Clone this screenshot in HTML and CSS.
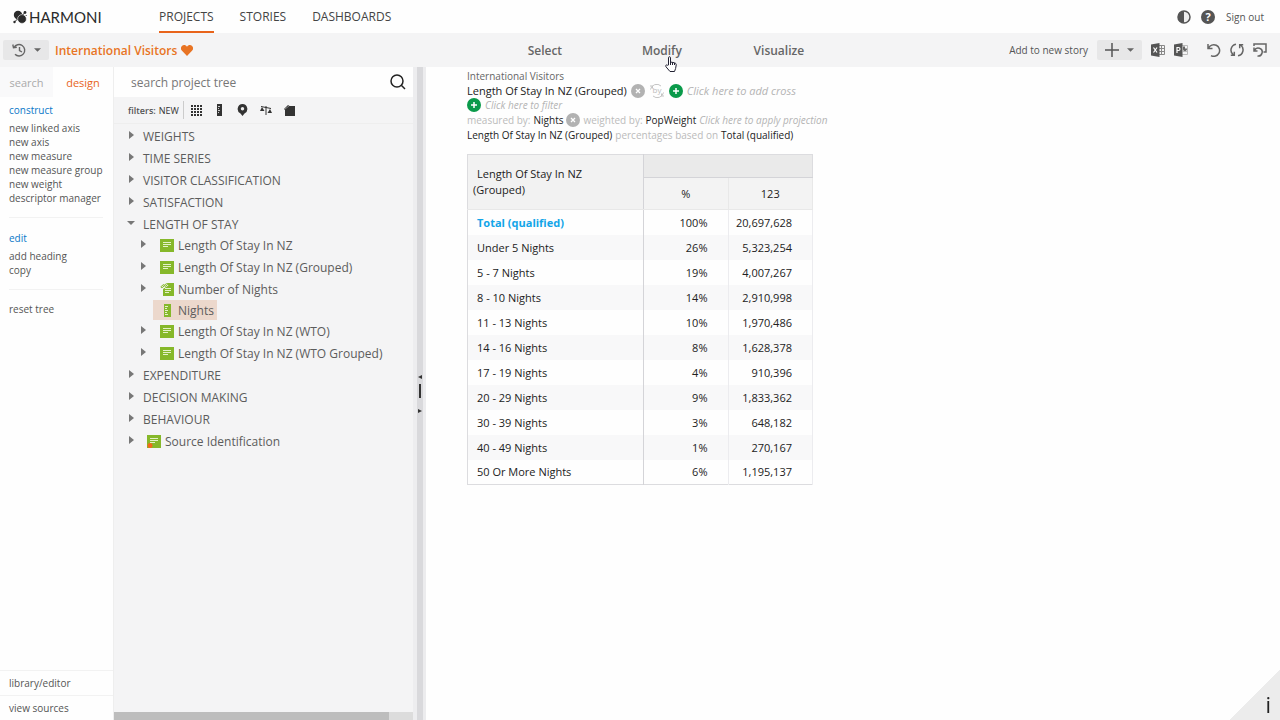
FILE: index.html
```html
<!DOCTYPE html>
<html lang="en">
<head>
<meta charset="UTF-8">
<meta name="viewport" content="width=device-width, initial-scale=1">
<title>Harmoni - International Visitors</title>
<link rel="stylesheet" href="styles.css">
</head>
<body>

<!-- shared icons -->
<svg class="defs" width="0" height="0" aria-hidden="true">
  <symbol id="arrow" viewBox="0 0 6 8"><path d="M1 0l5 4-5 4z"/></symbol>
  <symbol id="axis" viewBox="0 0 14 13">
    <path fill="#86b82a" d="M0 0h14v13H0z"/>
    <path stroke="#e4f1c8" d="M3 3.5h8M3 5.5h8M3 7.5h5"/>
  </symbol>
  <symbol id="close" viewBox="0 0 14 14">
    <circle cx="7" cy="7" r="7" fill="#b2b2b2"/>
    <path stroke="#fff" stroke-width="1.3" d="M5 5l4 4M9 5l-4 4"/>
  </symbol>
  <symbol id="plus" viewBox="0 0 14 14">
    <circle cx="7" cy="7" r="7" fill="#0a9a4a"/>
    <path stroke="#fff" stroke-width="1.5" d="M4 7h6M7 4v6"/>
  </symbol>
  <symbol id="caret" viewBox="0 0 8 4"><path d="M0 0h8L4 4z"/></symbol>
</svg>

<header class="topbar">
  <a class="logo" href="#">
    <svg width="14" height="14" viewBox="0 0 14 14" fill="#2b2b2b">
      <circle cx="5" cy="5" r="4.2"/>
      <circle cx="9" cy="9" r="4.4" stroke="#fefefe" stroke-width=".6"/>
      <circle cx="12" cy="2.5" r="1.4"/>
      <circle cx="1.5" cy="12" r="1.2"/>
      <circle cx="13.2" cy="5.5" r=".6"/>
      <path stroke="#2b2b2b" d="M1.5 12l3-3M9 5.500l3-3"/>
    </svg>
    <span>HARMONI</span>
  </a>
  <nav class="main-nav">
    <a class="active" href="#">PROJECTS</a>
    <a href="#">STORIES</a>
    <a href="#">DASHBOARDS</a>
  </nav>
  <div class="account">
    <button aria-label="Contrast">
      <svg width="14" height="14" viewBox="0 0 14 14"><circle cx="7" cy="7" r="6" fill="#eee" stroke="#555" stroke-width="1.5"/><path fill="#555" d="M7 1a6 6 0 0 0 0 12z"/></svg>
    </button>
    <button aria-label="Help" class="help">?</button>
    <a href="#">Sign out</a>
  </div>
</header>

<div class="toolbar">
  <div class="project">
    <button class="drop" aria-label="History">
      <svg width="14" height="14" viewBox="0 0 14 14" fill="none" stroke="#666" stroke-width="1.4"><path d="M2 4.500A5.700 5.700 0 1 1 3 11.300M.8 1.500l.7 3.300 3.300-.5M7.500 4v3.500l2.500 1.500"/></svg>
      <svg class="caret" width="7" height="4"><use href="#caret"/></svg>
    </button>
    <h1>International Visitors</h1>
    <svg width="12" height="11" viewBox="0 0 12 11"><path fill="#e87424" d="M6 11L1 5.800A3.200 3.200 0 0 1 .9 1C2.300-.4 4.800-.3 6 1.800 7.200-.3 9.700-.4 11.100 1a3.200 3.200 0 0 1-.1 4.800z"/></svg>
  </div>
  <nav class="mode-nav">
    <a href="#">Select</a>
    <a href="#">Modify
      <svg class="pointer" width="12" height="16" viewBox="0 0 12 16"><path fill="#fff" stroke="#223" d="M3.500 9V1.800c0-1.500 2-1.500 2 0V6l4 .8c1.200.3 1.800 1 1.700 2.200l-.6 3.500-1.100 3H5L1 10.800c-1-1.300.4-2.500 1.500-1.500zM5.500 6v3M7.500 6.500v2.500M9.500 7v2"/></svg>
    </a>
    <a href="#">Visualize</a>
  </nav>
  <div class="tools">
    <span>Add to new story</span>
    <button class="drop add" aria-label="Add to new story">
      <svg width="14" height="14" viewBox="0 0 14 14" stroke="#555" stroke-width="1.5"><path d="M7 0v14M0 7h14"/></svg>
      <svg class="caret" width="7" height="4"><use href="#caret"/></svg>
    </button>
    <button aria-label="Export to Excel">
      <svg width="14" height="14" viewBox="0 0 14 14"><path fill="none" stroke="#888" d="M8 2.500h5.500v9H8M8 5.500h5.500M8 8.500h5.500M10.500 2.500v9"/><path fill="#555" d="M0 1.500L8.500 0v14L0 12.500z"/><path stroke="#fff" stroke-width="1.2" d="M2.500 4.500l3.500 5M6 4.500l-3.500 5"/></svg>
    </button>
    <button aria-label="Export to PowerPoint">
      <svg width="14" height="14" viewBox="0 0 14 14"><path fill="none" stroke="#bbb" d="M8 2.500h5.500v9H8M9 8.500h4"/><path fill="#666" d="M9 3.500h2v2h2a2 2 0 0 1-4 1z"/><path fill="#555" d="M0 1.500L8.500 0v14L0 12.500z"/><path stroke="#fff" stroke-width="1.2" fill="none" d="M3 10V4.500h1.500a1.500 1.500 0 0 1 0 3H3"/></svg>
    </button>
    <button class="undo" aria-label="Undo">
      <svg width="14" height="14" viewBox="0 0 14 14" fill="none" stroke="#666" stroke-width="1.5"><path d="M1 1v4.500h4.500M1.500 5.200A5.800 5.800 0 1 1 4 12.600"/></svg>
    </button>
    <button aria-label="Refresh">
      <svg width="14" height="14" viewBox="0 0 14 14" fill="none" stroke="#666" stroke-width="1.5"><path d="M6 1.200A6 6 0 0 0 3.500 12M.8 12.200h3.500V8.700M8 12.800A6 6 0 0 0 10.500 2M13.200 1.800H9.700v3.500"/></svg>
    </button>
    <button aria-label="Reset view">
      <svg width="14" height="14" viewBox="0 0 14 14" fill="none" stroke="#666" stroke-width="1.5"><path d="M1 3V1h12v8h-2.500M1 4.500v3.500h3.500M1.500 7.500A4 4 0 1 1 4.500 13"/></svg>
    </button>
  </div>
</div>

<main class="workspace">
  <aside class="side">
    <div class="tabs">
      <button>search</button>
      <button class="active">design</button>
    </div>
    <section>
      <h2>construct</h2>
      <a href="#">new linked axis</a>
      <a href="#">new axis</a>
      <a href="#">new measure</a>
      <a href="#">new measure group</a>
      <a href="#">new weight</a>
      <a href="#">descriptor manager</a>
    </section>
    <section>
      <h2>edit</h2>
      <a href="#">add heading</a>
      <a href="#">copy</a>
    </section>
    <section>
      <a href="#">reset tree</a>
    </section>
    <div class="side-links">
      <a href="#">library/editor</a>
      <a href="#">view sources</a>
    </div>
  </aside>

  <div class="tree-panel">
    <form class="search">
      <input type="text" aria-label="Search project tree" placeholder="search project tree">
      <button aria-label="Search">
        <svg width="16" height="16" viewBox="0 0 16 16" fill="none" stroke="#222" stroke-width="1.5"><circle cx="7" cy="7" r="6"/><path d="M11.300 11.300L15 15"/></svg>
      </button>
    </form>
    <div class="filters">
      <b>filters:</b>
      <button class="new">NEW</button>
      <button aria-label="Grid"><svg width="11" height="11" viewBox="0 0 11 11" stroke="#333" stroke-width="2" stroke-dasharray="2 1"><path d="M0 1h11M0 4h11M0 7h11M0 10h11"/></svg></button>
      <button aria-label="Measure"><svg width="11" height="12" viewBox="0 0 11 12"><path fill="#333" d="M3 0h5v12H3z"/><path stroke="#ccc" d="M4 2.500h2M4 4.500h1M4 6.500h2M4 8.500h1"/></svg></button>
      <button aria-label="Location"><svg width="11" height="12" viewBox="0 0 11 12"><path fill="#333" d="M5.500 0a5 5 0 0 1 2 9.500L5.500 12l-2-2.500a5 5 0 0 1 2-9.500z"/><circle cx="5.5" cy="4.8" r="1.7" fill="#eee"/></svg></button>
      <button aria-label="Weight"><svg width="12" height="11" viewBox="0 0 12 11" fill="#333"><path d="M0 6l2-4 2.500 4zM7.500 8L10 4l2 4z"/><path stroke="#333" fill="none" d="M1 1.500l10 2M6 1v9"/></svg></button>
      <button aria-label="Custom"><svg width="11" height="11" viewBox="0 0 11 11"><path fill="#333" d="M0 4l2-2 2-2 1.500 1H11v10H1V5z"/><path stroke="#aaa" stroke-width=".7" d="M1 4l4-3"/></svg></button>
    </div>
    <ul class="tree">
      <li><button><svg class="arrow"><use href="#arrow"/></svg>WEIGHTS</button></li>
      <li><button><svg class="arrow"><use href="#arrow"/></svg>TIME SERIES</button></li>
      <li><button><svg class="arrow"><use href="#arrow"/></svg>VISITOR CLASSIFICATION</button></li>
      <li><button><svg class="arrow"><use href="#arrow"/></svg>SATISFACTION</button></li>
      <li>
        <button><svg class="arrow open" viewBox="0 0 8 4"><path d="M0 0h8L4 4z"/></svg>LENGTH OF STAY</button>
        <ul>
          <li><button><svg class="arrow"><use href="#arrow"/></svg><svg class="type"><use href="#axis"/></svg>Length Of Stay In NZ</button></li>
          <li><button><svg class="arrow"><use href="#arrow"/></svg><svg class="type"><use href="#axis"/></svg>Length Of Stay In NZ (Grouped)</button></li>
          <li><button><svg class="arrow"><use href="#arrow"/></svg><svg class="type" viewBox="0 0 14 13"><path fill="#86b82a" d="M3 3l4-3h7v13H3z"/><path stroke="#e4f1c8" d="M5 5.500h6M5 7.500h6M5 9.500h4"/><path stroke="#f4f4f5" stroke-width="5" d="M0 5l7-4.500"/><path fill="none" stroke="#86b82a" d="M.8 3.800l2.700-2.300 1 1.300-2.600 2zM4 2.500L6.500.6l1 1.200L5 3.500z"/></svg>Number of Nights</button></li>
          <li><button class="selected"><svg class="type" viewBox="0 0 14 13"><path fill="#86b82a" d="M4 0h7v13H4z"/><path stroke="#e4f1c8" d="M5 2.500h3M5 4.500h2M5 6.500h3M5 8.500h2M5 10.500h3"/></svg>Nights</button></li>
          <li><button><svg class="arrow"><use href="#arrow"/></svg><svg class="type"><use href="#axis"/></svg>Length Of Stay In NZ (WTO)</button></li>
          <li><button><svg class="arrow"><use href="#arrow"/></svg><svg class="type"><use href="#axis"/></svg>Length Of Stay In NZ (WTO Grouped)</button></li>
        </ul>
      </li>
      <li><button><svg class="arrow"><use href="#arrow"/></svg>EXPENDITURE</button></li>
      <li><button><svg class="arrow"><use href="#arrow"/></svg>DECISION MAKING</button></li>
      <li><button><svg class="arrow"><use href="#arrow"/></svg>BEHAVIOUR</button></li>
      <li class="source"><button><svg class="arrow"><use href="#arrow"/></svg><svg class="type" viewBox="0 0 14 13"><path fill="#86b82a" d="M0 0h14v13H0z"/><path stroke="#e4f1c8" d="M3 3.500h8M3 5.500h8M3 7.500h5"/><circle cx="3" cy="10.5" r="2.5" fill="#f26a1b"/></svg>Source Identification</button></li>
    </ul>
    <div class="scrollbar"><div class="thumb"></div></div>
  </div>

  <div class="splitter">
    <svg width="4" height="44" viewBox="0 0 4 44" fill="#333"><path d="M4 3v4L0 5zM1 12h2v14H1zM0 37v4l4-2z"/></svg>
  </div>

  <section class="report">
    <div class="path">International Visitors</div>
    <div class="line axis-line">
      <span>Length Of Stay In NZ (Grouped)</span>
      <button aria-label="Remove axis"><svg class="badge"><use href="#close"/></svg></button>
      <svg class="by" width="16" height="14" viewBox="0 0 16 14"><path fill="none" stroke="#c4c4c4" d="M1 2h2.500v2.500M1.500 5.500A6.300 6.300 0 0 1 12 2M15 12h-2.500V9.500M14.500 8.500A6.300 6.300 0 0 1 4 12"/><text x="8" y="9" text-anchor="middle">by</text></svg>
      <button aria-label="Add cross"><svg class="badge"><use href="#plus"/></svg></button>
      <a class="hint" href="#">Click here to add cross</a>
    </div>
    <div class="line filter-line">
      <button aria-label="Add filter"><svg class="badge"><use href="#plus"/></svg></button>
      <a class="hint" href="#">Click here to filter</a>
    </div>
    <div class="line">
      <span class="muted">measured by:</span>
      <span>Nights</span>
      <button aria-label="Remove measure"><svg class="badge"><use href="#close"/></svg></button>
      <span class="muted">weighted by:</span>
      <span>PopWeight</span>
      <a class="hint" href="#">Click here to apply projection</a>
    </div>
    <div class="line">
      <span>Length Of Stay In NZ (Grouped)</span>
      <span class="muted">percentages based on</span>
      <span>Total (qualified)</span>
    </div>

    <table>
      <thead>
        <tr><th class="axis-head" rowspan="2" scope="col">Length Of Stay In NZ (Grouped)</th><th class="group" colspan="2"></th></tr>
        <tr><th class="unit" scope="col">%</th><th class="unit" scope="col">123</th></tr>
      </thead>
      <tbody>
        <tr class="total"><th scope="row">Total (qualified)</th><td>100%</td><td>20,697,628</td></tr>
        <tr><th scope="row">Under 5 Nights</th><td>26%</td><td>5,323,254</td></tr>
        <tr><th scope="row">5 - 7 Nights</th><td>19%</td><td>4,007,267</td></tr>
        <tr><th scope="row">8 - 10 Nights</th><td>14%</td><td>2,910,998</td></tr>
        <tr><th scope="row">11 - 13 Nights</th><td>10%</td><td>1,970,486</td></tr>
        <tr><th scope="row">14 - 16 Nights</th><td>8%</td><td>1,628,378</td></tr>
        <tr><th scope="row">17 - 19 Nights</th><td>4%</td><td>910,396</td></tr>
        <tr><th scope="row">20 - 29 Nights</th><td>9%</td><td>1,833,362</td></tr>
        <tr><th scope="row">30 - 39 Nights</th><td>3%</td><td>648,182</td></tr>
        <tr><th scope="row">40 - 49 Nights</th><td>1%</td><td>270,167</td></tr>
        <tr><th scope="row">50 Or More Nights</th><td>6%</td><td>1,195,137</td></tr>
      </tbody>
    </table>
  </section>
</main>

<button class="info" aria-label="Information"><span>i</span></button>

</body>
</html>
```
FILE: styles.css
```css
* { box-sizing: border-box; margin: 0; padding: 0; }
body {
  font-family: "Open Sans", "Noto Sans", sans-serif;
  font-size: 12px;
  color: #555;
  background: #fefefe;
  height: 100vh;
  display: flex;
  flex-direction: column;
  overflow: hidden;
}
button { font: inherit; color: inherit; background: none; border: none; cursor: pointer; display: flex; align-items: center; }
a { color: inherit; text-decoration: none; }
svg { display: block; flex: none; }
ul { list-style: none; }
.defs { position: absolute; }

/* top bar */
.topbar {
  display: flex;
  align-items: center;
  height: 33px;
  padding: 0 16px 0 13px;
}
.logo {
  display: flex;
  align-items: center;
  gap: 2px;
  width: 146px;
  color: #2b2b2b;
  font-family: Lato, sans-serif;
  font-size: 15px;
}
.main-nav { display: flex; gap: 26px; height: 100%; }
.main-nav a { line-height: 34px; font-weight: 500; color: #444; border-bottom: 2px solid transparent; height: 33px; }
.main-nav a.active { border-color: #e8641b; }
.account { display: flex; align-items: center; gap: 10px; margin-left: auto; font-size: 10px; font-weight: 500; }
.account a { margin-left: 1px; }
.help {
  width: 14px; height: 14px;
  justify-content: center;
  border-radius: 50%;
  background: #555; color: #fff;
  font-size: 11px; font-weight: 700;
}

/* toolbar */
.toolbar {
  display: grid;
  grid-template-columns: 38% auto 1fr;
  align-items: center;
  height: 34px;
  background: #f4f4f5;
}
.project { display: flex; align-items: center; gap: 4px; padding-left: 3px; }
.project h1 { font-size: 12px; font-weight: 600; color: #e87424; margin-left: 2px; }
.drop { gap: 8px; height: 20px; padding: 0 8px 0 9px; background: #e7e7e8; border-radius: 2px; }
.caret { fill: #666; }
.mode-nav { display: flex; }
.mode-nav a { position: relative; width: 117px; text-align: center; font-weight: 600; color: #666; }
.pointer { position: absolute; left: 62px; top: 14px; }
.tools { display: flex; align-items: center; justify-content: flex-end; gap: 9px; padding-right: 13px; font-size: 10px; }
.add { padding: 0 8px; }
.undo { margin-left: 10px; }

/* columns */
.workspace { flex: 1; display: flex; min-height: 0; }
.side {
  width: 114px;
  display: flex;
  flex-direction: column;
  font-size: 10px;
  border-right: 1px solid #eee;
}
.tabs { display: flex; height: 30px; }
.tabs button { flex: 1; justify-content: center; font-size: 11px; }
.tabs button:first-child { background: #f9f9fa; color: #aaa; flex: none; width: 53px; }
.tabs button.active { color: #e8641b; }
.side section { margin: 0 10px 0 9px; padding: 12px 0; border-bottom: 1px solid #f2f2f2; }
.side section:nth-of-type(1) { padding-top: 5px; }
.side section:nth-of-type(3) { border: none; }
.side h2 { font-size: 10px; font-weight: 400; line-height: 16px; color: #0a78c8; margin-bottom: 3px; }
.side a { display: block; line-height: 14px; white-space: nowrap; }
.side-links { margin-top: auto; }
.side-links a { border-top: 1px solid #f2f2f2; line-height: 24px; padding-left: 9px; }

.tree-panel { width: 299px; display: flex; flex-direction: column; background: #f4f4f5; }
.search { display: flex; height: 30px; padding: 0 7px 0 17px; background: #fefefe; align-items: center; }
.search input { flex: 1; min-width: 0; border: none; outline: none; background: none; font: inherit; color: #666; }
.search input::placeholder { color: #777; opacity: 1; }
.filters { display: flex; align-items: center; gap: 12px; height: 27px; padding-left: 14px; font-size: 9px; border-bottom: 1px solid #eee; }
.filters b { font-weight: 600; }
.filters .new { height: 18px; padding-right: 4px; margin: 0 -5px 0 -9px; border-right: 1px solid #ccc; color: #333; }
.tree { flex: 1; padding: 2px 0 0 13px; color: #5c5c5c; }
.tree button { height: 22px; white-space: nowrap; }
.tree li:first-child button { height: 21px; }
.tree ul { padding-left: 12px; }
.arrow { width: 8px; height: 8px; margin: 0 8px 3px 0; fill: #777; }
.type { width: 14px; height: 13px; margin-right: 4px; }
.tree ul .arrow { margin-right: 13px; }
.source .arrow { margin-right: 12px; }
.tree ul .selected { height: 20px; margin-left: 14px; padding: 0 3px 0 7px; background: #ecd8cc; }
.scrollbar { height: 8px; background: #dcdcdc; }
.thumb { height: 8px; width: 92%; background: #bdbdbd; }

.splitter {
  width: 13px;
  display: flex;
  align-items: center;
  justify-content: center;
  background: #d9d9dc;
  border-left: 4px solid #ededef;
  border-right: 3px solid #ececee;
}

/* report */
.report { flex: 1; padding: 2px 0 0 41px; color: #222; }
.path { font-size: 10px; line-height: 14px; color: #666; }
.line { display: flex; align-items: center; gap: 3px; font-size: 10px; height: 15px; white-space: nowrap; }
.axis-line { font-size: 11px; gap: 4px; }
.filter-line { height: 14px; gap: 4px; }
.badge { width: 14px; height: 14px; }
.by text { font-size: 8px; fill: #bbb; }
.hint { font-style: italic; color: #b4b4b4; }
.muted { color: #bbb; }
table {
  width: 346px;
  margin-top: 12px;
  table-layout: fixed;
  border-collapse: collapse;
  border: 1px solid #dcdcdf;
  font-size: 11px;
}
th { font-weight: 400; text-align: left; }
.axis-head { width: 176px; padding: 0 40px 0 5px; line-height: 16px; text-indent: 4px; background: #f2f2f2; border-right: 1px solid #d4d4d8; border-bottom: 1px solid #e8e8e8; }
.group { height: 23px; background: #eaeaea; border-bottom: 1px solid #d4d4d8; }
.unit { height: 32px; text-align: center; background: #f3f3f3; border-right: 1px solid #e8e8e8; border-bottom: 1px solid #e8e8e8; }
tbody th, tbody td { height: 25px; }
tbody th { padding-left: 9px; border-right: 1px solid #d4d4d8; }
td { text-align: right; padding-right: 20px; border-right: 1px solid #ececef; }
tbody tr:nth-child(even) { background: #f8f8f9; }
.total th { color: #12a5e8; font-weight: 700; }

.info {
  position: fixed;
  right: 0; bottom: 0;
  width: 50px; height: 50px;
  justify-content: flex-end;
  align-items: flex-end;
  padding: 0 9px 2px 0;
  background: linear-gradient(135deg, transparent 50%, #ececec 50%);
  color: #222;
  font-size: 22px;
  line-height: 28px;
}
```
